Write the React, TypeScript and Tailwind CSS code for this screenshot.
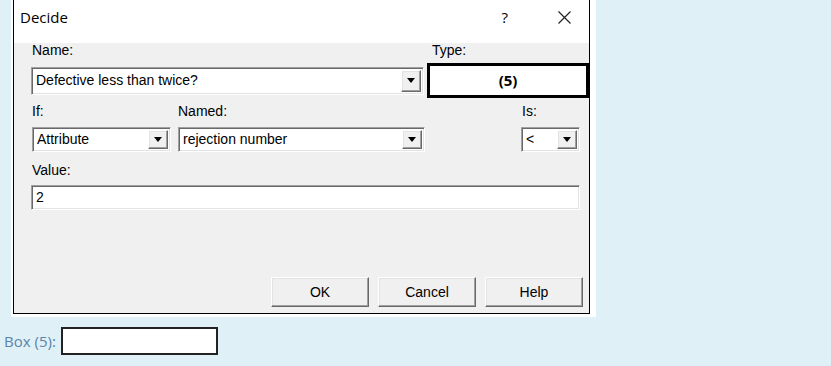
import React from "react";

const sunken =
  "border border-t-[#a0a0a0] border-l-[#a0a0a0] border-b-white border-r-white shadow-[inset_1px_1px_0_#696969,inset_-1px_-1px_0_#e3e3e3] bg-white";
const raised =
  "border border-t-white border-l-white border-b-[#696969] border-r-[#696969] shadow-[inset_-1px_-1px_0_#a0a0a0,inset_1px_1px_0_#e3e3e3] bg-[#f0f0f0]";

function Arrow() {
  return (
    <svg width="8" height="5" viewBox="0 0 8 5">
      <polygon points="0,0 8,0 4,5" fill="#000" />
    </svg>
  );
}

function Combo({ text, className }: { text: string; className: string }) {
  return (
    <div className={`${sunken} flex items-stretch p-[2px] ${className}`}>
      <span className="flex-1 flex items-center pl-[2px] truncate">{text}</span>
      <span className={`${raised} w-[20px] flex items-center justify-center`}>
        <Arrow />
      </span>
    </div>
  );
}

function Button({ label }: { label: string }) {
  return (
    <button className={`${raised} w-[98px] h-[30px] flex items-center justify-center`}>
      {label}
    </button>
  );
}

export default function App() {
  return (
    <div className="w-[831px] h-[366px] bg-[#dff0f7] font-['Liberation_Sans',sans-serif] text-[14px] text-black">
      <div className="ml-[11px] w-[585px] bg-white pl-[2px] pr-[6px] pb-[3px]">
        <div className="border-x border-b border-black">
          {/* title bar */}
          <div className="h-[34px] bg-white flex items-center text-[15px]">
            <span className="ml-[6px] font-['Open_Sans',sans-serif]">Decide</span>
            <span className="ml-auto mr-[50px] text-[15px] font-['Open_Sans',sans-serif]">?</span>
            <svg width="13" height="13" viewBox="0 0 13 13" className="mr-[18px]">
              <path d="M0.5 0.5L12.5 12.5M12.5 0.5L0.5 12.5" stroke="#222" strokeWidth="1.2" />
            </svg>
          </div>

          {/* body */}
          <div className="bg-[#f0f0f0] pl-[17px] pb-[6px]">
            <div className="mt-[9px] h-[14px] flex items-center leading-none">
              <span className="ml-[1px] w-[400px]">Name:</span>
              <span>Type:</span>
            </div>
            <div className="mt-[6px] h-[35px] flex items-center">
              <Combo text="Defective less than twice?" className="w-[393px] h-[28px]" />
              <div className="ml-[3px] w-[162px] h-[35px] border-[3px] border-black bg-white flex items-center justify-center font-['Open_Sans',sans-serif] font-bold text-[15px]">
                (5)
              </div>
            </div>
            <div className="mt-[6px] h-[14px] flex items-center leading-none">
              <span className="ml-[1px] w-[146px]">If:</span>
              <span className="w-[344px]">Named:</span>
              <span>Is:</span>
            </div>
            <div className="mt-[9px] h-[25px] flex items-center">
              <Combo text="Attribute" className="ml-[1px] w-[139px] h-[25px]" />
              <Combo text="rejection number" className="ml-[7px] w-[247px] h-[25px]" />
              <Combo text="<" className="ml-[96px] w-[59px] h-[25px]" />
            </div>
            <div className="mt-[11px] h-[14px] flex items-center leading-none">
              <span className="ml-[1px]">Value:</span>
            </div>
            <div className="mt-[8px]">
              <div className={`${sunken} w-[549px] h-[25px] flex items-center pl-[4px]`}>2</div>
            </div>
            <div className="mt-[67px] flex gap-[9px] pl-[240px]">
              <Button label="OK" />
              <Button label="Cancel" />
              <Button label="Help" />
            </div>
          </div>
        </div>
      </div>
      <div className="mt-[10px] ml-[4px] flex items-center">
        <span className="font-['Open_Sans',sans-serif] text-[15px] text-[#5b84a8]">Box (5):</span>
        <div className="ml-[5px] w-[157px] h-[28px] border-2 border-[#222] bg-white" />
      </div>
    </div>
  );
}
